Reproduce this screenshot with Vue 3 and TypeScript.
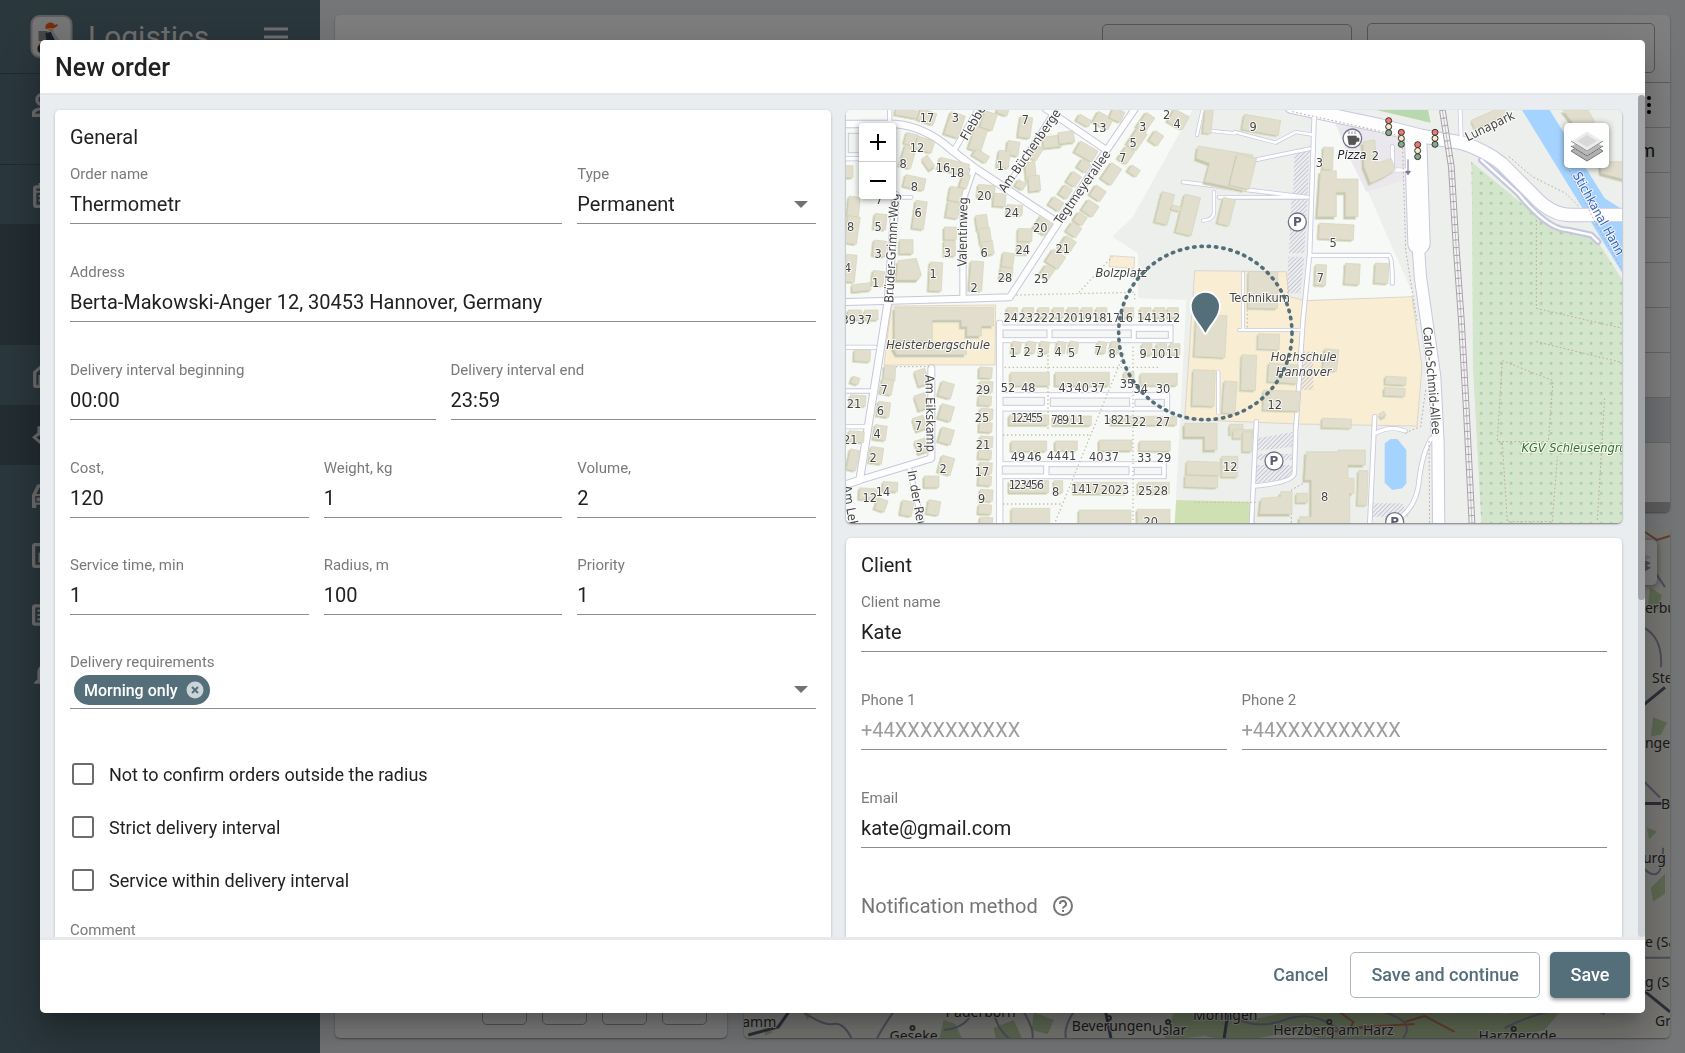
<script setup lang="ts">
import { ref } from 'vue'

interface Field { id: string; label: string; value: string; type?: string; hint?: string }
type Block = [number, number, number, number, number?]
type Label = [number, number, string, number?, string?]
interface Tile { dx: number; dy: number; blocks: Block[]; shapes: string[]; labels: Label[] }

const nameField = ref('Thermometr')
const orderType = ref('Permanent')
const address = ref('Berta-Makowski-Anger 12, 30453 Hannover, Germany')

const intervals = ref<Field[]>([
  { id: 'from', label: 'Delivery interval beginning', value: '00:00' },
  { id: 'to', label: 'Delivery interval end', value: '23:59' },
])
const numbers = ref<Field[]>([
  { id: 'cost', label: 'Cost,', value: '120' },
  { id: 'weight', label: 'Weight, kg', value: '1' },
  { id: 'volume', label: 'Volume,', value: '2' },
  { id: 'service', label: 'Service time, min', value: '1' },
  { id: 'radius', label: 'Radius, m', value: '100' },
  { id: 'priority', label: 'Priority', value: '1' },
])
const phones = ref<Field[]>([
  { id: 'phone1', label: 'Phone 1', value: '', hint: '+44XXXXXXXXXX' },
  { id: 'phone2', label: 'Phone 2', value: '', hint: '+44XXXXXXXXXX' },
])
const clientName = ref('Kate')
const email = ref('kate@gmail.com')
const options = ref([
  { id: 'opt-radius', text: 'Not to confirm orders outside the radius', on: false },
  { id: 'opt-strict', text: 'Strict delivery interval', on: false },
  { id: 'opt-within', text: 'Service within delivery interval', on: false },
])

/* Side navigation icons: 24-unit paths with the class of the row that holds them */
const navIcons = [
  { cls: 'profile', d: 'M9 1a6 6 0 1 1 0 12A6 6 0 0 1 9 1zm0 3a3 3 0 1 0 0 6 3 3 0 0 0 0-6zm0 10c4 0 9 2 9 5v4H0v-4c0-3 5-5 9-5zm0 3c-3 0-6 1-6 3h12c0-2-3-3-6-3z' },
  { cls: 'plan', d: 'M19 3h-1V1h-2v2H8V1H6v2H4a3 3 0 0 0-3 3v15c0 2 1 3 3 3h15a3 3 0 0 0 3-3V6a3 3 0 0 0-3-3zm0 18H4V10h15v11zM4 8V6h15v2H4zm2 4h11v2H6zm0 4h8v2H6z' },
  { cls: 'sub', d: '' },
  { cls: 'row', d: 'M1 22V9l9-8 9 8v13a2 2 0 0 1-2 2H3a2 2 0 0 1-2-2zm3-1h2v-9h8v9h2V10l-6-5-6 5v11z' },
  { cls: 'row active', d: 'M0 14l5-4V4h3v8l-4 2 5 4 11-4v3l-11 5L0 14z' },
  { cls: 'row', d: 'M18 4c0-1-1-2-2-2H6C5 2 4 3 4 4l-4 8v12h4v-3h14v3h3V12l-3-8zM7 5h9l2 6H4l3-6zm12 14H3v-6h16v6zM6 14a2 2 0 1 0 0 4 2 2 0 0 0 0-4z' },
  { cls: 'row', d: 'M19 1H3a3 3 0 0 0-3 3v17a3 3 0 0 0 3 3h16a3 3 0 0 0 3-3V4a3 3 0 0 0-3-3zm0 20H3V4h16v17zM6 10h3v9H6zm5-4h3v13h-3z' },
  { cls: 'row', d: 'M19 2H3a3 3 0 0 0-3 3v14c0 2 1 3 3 3h16a3 3 0 0 0 3-3V5a3 3 0 0 0-3-3zm0 17H3V5h16v14zM5 7h9v2H5zm0 4h9v2H5zm0 4h9v2H5z' },
  { cls: 'row', d: 'M2 20v-1l3-3v-6c0-4 2-7 5-7V1h3v2c3 1 5 3 5 7v6l2 3v1H2z' },
]

/* Street map, three units per pixel; every tile carries its own origin */
const tiles: Tile[] = [
  {
    dx: -18, dy: -30,
    blocks: [
      [205, 40, 75, 22, 10], [262, 50, 50, 36, 20], [345, 75, 44, 70, 18], [447, 62, 38, 50, 18], [415, 118, 38, 70, 18],
      [424, 168, 46, 24, 32], [490, 32, 32, 24, 20], [557, 82, 36, 62, 8], [520, 145, 36, 42, 8], [492, 178, 34, 50, 8],
      [215, 118, 36, 34, 14], [255, 134, 52, 38, 16], [205, 170, 34, 66, 16], [265, 188, 22, 40, -35], [342, 200, 90, 36, 14],
      [376, 243, 22, 44, 18], [225, 248, 62, 36, 12], [638, 125, 55, 34, -6], [680, 112, 46, 34, -8], [592, 160, 18, 44, 32],
      [573, 215, 30, 56, -6], [584, 250, 34, 46, -6], [543, 255, 26, 22, 30], [740, 155, 60, 38, 30], [733, 62, 40, 22, 30],
      [790, 62, 50, 36, 28], [832, 45, 36, 34, 24], [733, 198, 30, 30, 34], [703, 238, 30, 38, 34], [678, 276, 28, 34, 34],
      [650, 312, 36, 30, 34], [918, 68, 30, 54, 34], [892, 118, 34, 60, 34], [860, 166, 30, 46, 34], [815, 222, 36, 58, 34],
      [775, 280, 36, 36, 34], [752, 325, 38, 38, 34], [722, 357, 30, 30, 34], [703, 390, 34, 34, 34], [883, 213, 30, 24, 34],
      [950, 115, 30, 36, 34], [1016, 58, 50, 44, 28], [440, 274, 50, 38, 4], [480, 300, 36, 38, 4], [525, 330, 46, 30, 4],
      [348, 283, 38, 42, 10], [340, 330, 36, 48, 10], [240, 345, 34, 84, 8], [332, 400, 36, 38, 0], [330, 445, 34, 46, 0],
      [427, 368, 34, 46, -8], [436, 408, 34, 46, -8], [444, 444, 34, 40, -8], [610, 378, 42, 44, 34], [556, 405, 42, 38, 2],
      [550, 445, 34, 36, 2], [505, 480, 34, 42, 8], [500, 520, 36, 34, 8], [683, 435, 36, 44, 34], [648, 478, 44, 44, 34],
      [622, 518, 30, 36, 34], [42, 320, 34, 60, 6], [38, 390, 36, 82, 8], [122, 365, 36, 46, 6], [120, 445, 38, 46, 6],
      [200, 440, 40, 42, 0], [115, 535, 34, 44, 8], [65, 562, 56, 22, -6], [32, 505, 32, 82, 6], [288, 530, 38, 86, 3],
      [410, 528, 38, 88, 4], [28, 215, 24, 36, 0], [975, 325, 38, 94, 14], [1045, 345, 48, 118, 14], [1010, 325, 30, 14, 14],
      [1160, 335, 36, 80, 14], [1105, 65, 24, 70, 6],
    ],
    shapes: ['M175 482L230 475L245 525L235 540H170Z', 'M1075 138L1240 165L1215 270L1095 245L1110 190L1070 175Z'],
    labels: [
      [262, 53, '17'], [347, 53, '3'], [557, 58, '7'], [232, 142, '12'], [190, 192, '8'], [310, 203, '16'], [352, 218, '18'],
      [482, 198, '1'], [224, 260, '8'], [434, 287, '20'], [516, 337, '24'], [235, 338, '6'], [33, 380, '8'], [115, 380, '5'],
      [115, 462, '3'], [24, 502, '4'], [108, 548, '1'], [280, 520, '1'], [403, 562, '2'], [323, 459, '3'], [433, 459, '6'],
      [549, 449, '24'], [496, 533, '28'], [602, 384, '20'], [669, 447, '21'], [605, 537, '25'], [849, 172, '7'], [880, 128, '5'],
      [909, 80, '3'], [779, 83, '13'], [1012, 71, '4'], [981, 43, '2'], [118, 300, '7'],
      [400, 68, 'Flebbe', -60], [570, 152, 'Am Büchenberge', -55], [728, 262, 'Tegtmeyerallee', -55],
      [369, 396, 'Valentinweg', -89], [156, 444, 'Brüder-Grimm-Weg', -87], [845, 518, 'Bolzplatz', 0, 'it'],
    ],
  },
  {
    dx: 1167, dy: -30,
    blocks: [
      [280, 175, 30, 66, 2], [305, 395, 104, 46, 3], [258, 525, 32, 62, 3], [353, 522, 44, 62, 3], [441, 520, 40, 60, 3],
      [85, 570, 88, 110, 1], [765, 52, 110, 28, -24], [80, 75, 110, 46, 10], [25, 215, 60, 96, 14],
    ],
    shapes: [
      'M258 212H305V237H370V350H333V277H305V350H248Z', 'M385 125L420 120L428 190L470 175L482 210L450 230L408 250L388 200Z',
      'M985 30H1060L1080 65L1030 90Z', 'M1095 185H1175V240L1100 220Z',
    ],
    labels: [
      [55, 80, '9'], [254, 188, '3'], [295, 428, '5'], [257, 532, '7'], [422, 168, '2'], [352, 165, 'Pizza', 0, 'it strong'],
      [75, 592, 'Technikum'], [765, 78, 'Lunapark', -26], [1092, 340, 'Stichkanal Hann', 61, 'water'],
    ],
  },
  {
    dx: -18, dy: 600,
    blocks: [
      [45, 15, 40, 30, 0], [95, 15, 40, 30, 0], [68, 137, 48, 34, 4], [47, 212, 22, 22, 20], [150, 190, 34, 44, 4],
      [142, 230, 34, 46, 10], [132, 298, 36, 44, 8], [122, 368, 36, 44, 8], [110, 436, 38, 48, 8], [40, 450, 28, 62, 12],
      [246, 202, 34, 46, -18], [246, 275, 34, 46, -18], [240, 340, 34, 40, -18], [246, 408, 34, 40, -18], [320, 240, 38, 46, 16],
      [320, 308, 38, 46, 16], [320, 378, 38, 46, 16], [320, 466, 38, 52, 16], [55, 272, 46, 32, 4], [50, 380, 46, 32, 4],
      [85, 552, 52, 34, 4], [152, 530, 44, 28, 4], [125, 585, 30, 36, 20], [276, 515, 44, 34, 0], [202, 595, 34, 44, 10],
      [282, 593, 36, 42, 10], [438, 188, 38, 32, 4], [440, 230, 38, 32, 4], [436, 272, 38, 28, 4], [440, 312, 38, 32, 4],
      [438, 352, 38, 28, 4], [440, 395, 38, 32, 4], [436, 434, 38, 26, 4], [438, 474, 38, 32, 4], [436, 512, 38, 28, 4],
      [440, 556, 38, 34, 4], [436, 598, 38, 28, 4], [440, 632, 38, 20, 4],
      [518, 8, 32, 30], [566, 8, 32, 30], [612, 8, 32, 30], [656, 8, 32, 30], [700, 8, 32, 30], [742, 8, 32, 30], [786, 8, 32, 30],
      [866, 8, 32, 30], [918, 8, 32, 30], [960, 8, 32, 30], [1000, 8, 32, 30],
      [530, 112, 26, 34, 8], [574, 112, 26, 34, 8], [614, 112, 26, 34, 8], [664, 112, 26, 34, 8], [702, 112, 26, 34, 8], [786, 112, 26, 34, 8],
      [826, 112, 26, 34, 8], [922, 118, 30, 34], [966, 118, 30, 34], [1006, 118, 30, 34],
      [571, 207, 116, 40], [728, 207, 162, 40], [868, 200, 30, 28], [958, 208, 110, 36], [568, 330, 118, 30], [698, 332, 114, 28],
      [850, 332, 70, 26], [948, 332, 126, 26], [568, 408, 106, 30], [680, 407, 66, 28], [828, 406, 98, 32], [946, 408, 92, 30],
      [568, 530, 118, 36], [656, 530, 26, 36], [782, 534, 160, 34], [942, 534, 94, 34], [573, 620, 114, 50], [796, 622, 156, 44],
      [942, 620, 98, 44], [1113, 78, 92, 126, 3], [1092, 234, 66, 108, 2], [1170, 262, 38, 96, 4], [1090, 475, 98, 40, 2],
      [1085, 515, 98, 34, 2], [1170, 470, 48, 62], [1190, 358, 40, 30],
    ],
    shapes: [
      'M165 -8H462V48H425V78H382V50H365V30H278V92H165Z', 'M152 96H380V134H172Z', 'M1035 340H1132V420H1095V380H1035Z',
    ],
    labels: [
      [27, 30, '39'], [75, 28, '37'], [133, 240, '7'], [122, 302, '6'], [112, 371, '4'], [100, 443, '2'], [43, 281, '21'],
      [32, 390, '21'], [236, 346, '7'], [238, 413, '3'], [310, 476, '2'], [90, 563, '12'], [130, 544, '14'],
      [430, 240, '29'], [427, 323, '25'], [430, 405, '21'], [427, 485, '17'], [426, 567, '9'],
      [513, 22, '24'], [558, 22, '23'], [603, 24, '22'], [647, 24, '21'], [692, 22, '20'], [735, 22, '19'], [779, 22, '18'],
      [820, 22, '17'], [858, 24, '16'], [914, 22, '14'], [956, 22, '13'], [1000, 22, '12'],
      [520, 128, '1'], [562, 124, '2'], [602, 128, '3'], [655, 126, '4'], [696, 128, '5'], [775, 123, '7'], [817, 132, '8'],
      [910, 131, '9'], [955, 131, '10'], [1000, 131, '11'],
      [505, 234, '52'], [566, 234, '48'], [678, 234, '43'], [726, 234, '40'], [775, 234, '37'], [862, 222, '35'], [903, 237, '34'],
      [970, 237, '30'], [525, 323, '1'], [541, 323, '2'], [556, 323, '3'], [569, 323, '4'], [585, 323, '5'], [600, 323, '5'],
      [645, 328, '7'], [661, 328, '8'], [678, 328, '9'], [712, 330, '11'], [813, 329, '18'], [853, 329, '21'],
      [898, 334, '22'], [970, 334, '27'], [535, 440, '49'], [584, 440, '46'], [643, 438, '44'], [688, 438, '41'], [770, 440, '40'],
      [816, 440, '37'], [914, 443, '33'], [973, 443, '29'],
      [518, 525, '1'], [534, 525, '2'], [551, 525, '3'], [568, 525, '4'], [584, 525, '5'], [602, 525, '6'], [648, 545, '8'],
      [716, 536, '14'], [757, 536, '17'], [805, 538, '20'], [847, 538, '23'], [917, 541, '25'], [963, 541, '28'], [933, 634, '20'],
      [1172, 470, '12'], [295, 104, 'Heisterbergschule', 0, 'it'], [272, 310, 'Am Eikskamp', 89],
      [233, 574, 'In der Reut', 80], [32, 590, 'Am Leb', 80],
    ],
  },
  {
    dx: 1167, dy: 600,
    blocks: [
      [102, 95, 64, 46, 2], [42, 188, 44, 106, 2], [140, 272, 108, 60, 2], [145, 190, 88, 56, 4], [288, 150, 42, 64, 6],
      [483, 212, 62, 24, 3], [480, 246, 62, 24, 3], [306, 340, 88, 28, 2], [384, 534, 28, 104, 2], [202, 564, 34, 28], [443, 314, 18, 14, -30],
      [25, 372, 60, 26], [38, 395, 28, 60],
    ],
    shapes: [
      'M215 425H310V420H392V465H340V505H358V550H345V645H195V620H230V510H210Z', 'M80 565L138 560V545H172V612H75Z',
    ],
    labels: [
      [207, 140, 'Hochschule', 0, 'it'], [207, 185, 'Hannover', 0, 'it'], [120, 285, '12'], [270, 560, '8'],
      [592, 212, 'Carlo-Schmid-Allee', 85], [1018, 412, 'KGV Schleusengru', 0, 'garden'],
    ],
  },
]

/* Streets: path, width of the casing, width of the carriageway */
const streets: [string, number, number][] = [
  ['M0 42H150Q240 50 320 122L385 172L632 335', 26, 20],
  ['M0 576L492 562L640 335L782 122L872 -10', 24, 18],
  ['M385 172L352 270V562', 22, 16],
  ['M327 118L400 -6', 20, 15],
  ['M482 232L622 10', 18, 12],
  ['M600 -4L782 120', 24, 18],
  ['M150 255L127 575L42 1110L0 1124', 26, 20],
  ['M150 262H196', 14, 9],
  ['M42 1110L257 1045V775', 24, 18],
  ['M192 1080L232 1250', 18, 13],
  ['M0 712H88M0 843H78M0 950H62', 16, 11],
  ['M0 146H60', 16, 11],
  ['M132 -5V42', 16, 11],
  ['M462 640V1250', 22, 17],
  ['M1406 10L1392 430L1372 630L1358 850L1350 960L1346 1090Q1340 1118 1225 1128', 16, 11],
  ['M1012 216L1387 262H1120M1228 150L1392 116', 14, 9],
  ['M1392 436H1630Q1640 440 1640 520', 15, 10],
  ['M1105 246V310Q1100 330 1072 332', 12, 8],
  ['M1180 660H1372M1192 490V660', 12, 8],
  ['M1054 75L1072 -5M1072 60L1167 70M1167 66L1290 98L1350 66L1400 74', 12, 8],
  ['M1232 935L1217 1250', 16, 11],
  ['M1118 785V910', 12, 8],
  ['M1587 920L1572 1245', 16, 11],
  ['M1592 968Q1640 945 1680 964', 14, 10],
  ['M1757 985Q1728 1030 1718 1130Q1707 1190 1667 1220', 16, 11],
  ['M1640 110V175M1640 180H1680', 14, 10],
  ['M1907 150L2017 250Q2107 360 2167 360L2237 375L2257 395', 20, 7],
  ['M1337 -10L1597 45L1727 78L1847 98Q1917 120 1967 160L2067 260Q2117 315 2177 315H2340', 44, 38],
  ['M1847 95L1843 -5', 14, 10],
  ['M1702 78L1712 320L1724 500L1744 640L1767 800L1777 1000L1779 1250', 40, 34],
  ['M1710 90L1720 400', 70, 64],
]
const islands: Block[] = [
  [472, 660, 132, 23], [619, 660, 238, 23], [872, 664, 96, 21],
  [472, 862, 124, 24], [614, 864, 238, 25], [868, 868, 88, 21],
  [470, 1068, 124, 24], [610, 1070, 240, 24], [866, 1072, 82, 22],
]
const bands: Block[] = [[462, 645, 520, 53], [462, 848, 510, 55], [462, 1055, 500, 51]]
const parking = [
  'M1347 130L1392 120L1386 255H1342Z', 'M1337 265H1386L1376 430H1330Z', 'M1328 440H1376L1364 550H1324Z',
  'M1235 985L1345 965V1010L1235 1022Z', 'M1232 1032H1342V1050H1232Z', 'M1230 1065H1342V1105L1228 1120Z',
  'M1367 725H1403V840H1367Z', 'M1580 1180H1670L1690 1220H1580Z',
]
const paths = [
  'M512 555L867 547V572', 'M477 772H945', 'M607 700V960', 'M862 710V1250', 'M472 975H735', 'M835 730L627 1240', 'M472 1182H650',
  'M700 547L800 440', 'M1205 540V660', 'M1046 1177H1230', 'M115 770H255',
]
const trails = [
  'M1340 5L1597 62L1670 80L1680 420L1715 640', 'M1990 140L2060 200L2160 250L2200 290', 'M2160 160L2250 340L2330 480',
  'M2072 330V595L2330 655', 'M2072 695L2330 758M1970 752L2122 812L2108 995H1955L1970 752', 'M1970 1000L1985 1235H2120L2135 1040', 'M2277 865L2255 1230',
  'M1740 840L1725 950L1680 968', 'M1752 1250L1750 990', 'M1337 1250V1140L1390 1110',
]
const lights = [[1629, 50], [1667, 85], [1716, 122], [1768, 85]]
const parks = [[1355, 336], [1285, 1053], [1647, 1235]]

const placesRight: [number, number, string][] = [
  [900, 86, 'erbu'], [907, 156, 'Ste'], [900, 221, 'nger'], [916, 281, 'B'], [898, 335, 'urg'], [900, 419, 'e (Sa'], [900, 459, 'g (Sa'], [910, 498, 'Gr'],
]
const placesBottom: [number, number, string][] = [
  [-1, 499, 'amm'], [146, 513, 'Geseke'], [202, 489, 'Paderborn'], [328, 503, 'Beverungen'], [408, 507, 'Uslar'], [449, 492, 'Moringen'],
  [529, 507, 'Herzberg am Harz'], [734, 513, 'Harzgerode'],
]
</script>

<template>
  <div class="shell">
    <aside class="side">
      <div class="brand">
        <svg class="logo" viewBox="0 0 42 43" aria-hidden="true">
          <rect x="1" y="1" width="40" height="41" rx="8" fill="#ececec" stroke="#bdbdbd" stroke-width="2" />
          <path d="M8 16h9v10H8z" fill="#8b8f90" />
          <path d="M15 12c0-5 8-6 9-2l3-1v2l-3 2-9 1z" fill="#ea5b1b" />
          <path d="M18 13h5v4l-3 2-2-2z" fill="#e8b894" />
          <path d="M15 18l5-1 8 9-3 4-9-3z" fill="#2e3d50" />
          <path d="M23 17l6 8-3 3-5-9z" fill="#c9c4ce" />
          <path d="M7 34c0-7 6-9 12-5l-3 5z" fill="#ea5b1b" />
          <circle cx="11" cy="34" r="4" fill="#333" />
        </svg>
        <span class="brand-name">Logistics</span>
        <svg class="burger" viewBox="0 0 24 20" aria-hidden="true"><path d="M0 2h24M0 10h24M0 18h24" stroke="#ddd" stroke-width="3" /></svg>
      </div>
      <div v-for="(n, i) in navIcons" :key="i" class="nav" :class="n.cls">
        <svg v-if="n.d" viewBox="0 0 24 24" aria-hidden="true"><path :d="n.d" fill-rule="evenodd" /></svg>
      </div>
    </aside>

    <div class="page">
      <section class="panel orders">
        <div class="tools"><span class="box narrow"></span><span class="box"></span></div>
        <div class="line head"><svg viewBox="0 0 6 20" aria-hidden="true"><circle cx="3" cy="3" r="2" /><circle cx="3" cy="10" r="2" /><circle cx="3" cy="17" r="2" /></svg></div>
        <div class="line text">m</div>
        <div v-for="r in 5" :key="r" class="line"></div>
        <div class="line picked"></div>
        <div class="line last"></div>
        <div class="hbar"></div>
      </section>
      <div class="lower">
        <section class="panel pager"><span v-for="b in 4" :key="b" class="page-btn"></span></section>
        <section class="panel region">
          <svg viewBox="0 0 925 510" preserveAspectRatio="xMaxYMax slice" aria-hidden="true">
            <rect width="925" height="510" fill="#efeee8" />
            <g fill="#bcd3a6">
              <path d="M430 485l30-8 50 14 80-16 30 5 100-4 40 10 60-8-20 24-50 10-40 4-60-6-60 4-40-10-60 10-30-6-40 4z" />
              <path d="M200 492l12 4 6 14h-22zM250 500l20-8 8 18h-26zM290 484l20 8-6 14-16-4zM60 484l8 2-4 6zM20 500l10 4-8 4z" />
              <path d="M905 60l12 8-4 14-10-4zM908 190l14 5-6 12-10 2zM906 360l14-14v20l-12 8zM902 300l10 4-8 8z" />
            </g>
            <g fill="none" stroke="#9a9cb8" stroke-width="2">
              <path d="M60 484q20 14 30 12t18 14M150 484q-14 20-18 30M230 480q-5 20-30 22M250 484q4 20 20 30M280 484q12 20 8 28M330 484q-10 14-8 26M480 484q30 20 60 8t60 14M640 484q30 10 20 24t50 16M760 500q60-30 100-14" />
              <path d="M900 30l20 30M898 100q20 10 18 40M898 340q20 20 20-20M900 430h25M895 250l20 20" />
            </g>
            <path d="M5 507l30-8 14-20M361 480l6 30M484 484l-4 26M898 462l27 22M898 276h27M898 178l22-18" fill="none" stroke="#5b5c78" stroke-width="3" />
            <path d="M595 484l14 10-8 14M660 494l20-6 30 16M600 500l70-4M900 5l12 8 13-4M608 500l20 0M560 500l40 4" fill="none" stroke="#cc7c60" stroke-width="2" />
            <g class="place">
              <text v-for="p in placesRight" :key="p[1]" :x="p[0]" :y="p[1]">{{ p[2] }}</text>
              <text v-for="p in placesBottom" :key="p[2]" :x="p[0]" :y="p[1]">{{ p[2] }}</text>
            </g>
            <g fill="#eee" stroke="#555" stroke-width="2"><circle cx="169" cy="500" r="2" /><circle cx="365" cy="490" r="2" /><circle cx="424" cy="494" r="2" /><circle cx="585" cy="494" r="2" /><circle cx="769" cy="501" r="2" /></g>
          </svg>
          <span class="layers"><svg viewBox="0 0 36 34" aria-hidden="true"><path d="M1 22l17 10 17-10-17-8zM1 17l17 10 17-10-17-8z" fill="#999" /><path d="M1 11l17 10 17-10L18 2z" fill="#ddd" /></svg></span>
        </section>
      </div>
    </div>

    <div class="backdrop">
      <div class="dialog" role="dialog" aria-labelledby="dialog-title">
        <header class="dialog-head"><h1 id="dialog-title">New order</h1></header>

        <div class="dialog-main">
          <div class="dialog-body">
            <section class="card">
              <h2>General</h2>
              <div class="grid three">
                <div class="field wide"><label for="order-name">Order name</label><input id="order-name" v-model="nameField" type="text" /></div>
                <div class="field">
                  <label for="order-type">Type</label>
                  <select id="order-type" v-model="orderType"><option>Permanent</option><option>Temporary</option></select>
                  <svg class="arrow" viewBox="0 0 14 7" aria-hidden="true"><path d="M0 0h14L7 7z" /></svg>
                </div>
                <div class="field full"><label for="address">Address</label><input id="address" v-model="address" type="text" /></div>
              </div>
              <div class="grid two">
                <div v-for="f in intervals" :key="f.id" class="field"><label :for="f.id">{{ f.label }}</label><input :id="f.id" v-model="f.value" type="text" /></div>
              </div>
              <div class="grid three tight">
                <div v-for="f in numbers" :key="f.id" class="field"><label :for="f.id">{{ f.label }}</label><input :id="f.id" v-model="f.value" type="text" /></div>
              </div>
              <div class="field">
                <span id="req-label" class="label">Delivery requirements</span>
                <div class="chips" role="group" aria-labelledby="req-label">
                  <span class="chip">Morning only
                    <button type="button" aria-label="Remove"><svg viewBox="0 0 18 18"><circle cx="9" cy="9" r="8.500" fill="#cbd4d8" /><path d="M6 6l6 6M12 6l-6 6" stroke="#546e7a" stroke-width="2" /></svg></button>
                  </span>
                  <svg class="arrow" viewBox="0 0 14 7" aria-hidden="true"><path d="M0 0h14L7 7z" /></svg>
                </div>
              </div>
              <div class="checks">
                <label v-for="o in options" :key="o.id" :for="o.id" class="check"><input :id="o.id" v-model="o.on" type="checkbox" />{{ o.text }}</label>
              </div>
              <div class="field"><label for="comment">Comment</label><input id="comment" type="text" /></div>
            </section>

            <div class="side-col">
              <section class="map">
                <svg class="plan-view" viewBox="0 0 2330 1239" preserveAspectRatio="xMidYMid slice" role="img" aria-label="Map">
                  <defs>
                    <pattern id="dots" width="30" height="30" patternUnits="userSpaceOnUse" x="1892" y="30"><rect x="11" y="6" width="7" height="8" fill="#a9ccaa" /></pattern>
                    <pattern id="hatch" width="9" height="9" patternUnits="userSpaceOnUse" patternTransform="rotate(45)"><path d="M1 0v9" stroke="#bdbcd6" stroke-width="3" /></pattern>
                  </defs>
                  <rect width="2330" height="1239" fill="#edefec" />
                  <path d="M0 0H1040L862 320L800 380L877 430V565L1022 570L987 1240H0Z" fill="#f6f9f5" />
                  <path d="M1407 15L1470 25L1705 560L1380 570Z" fill="#f6f9f5" />
                  <path d="M1467 35L1667 70L1677 210L1562 245L1510 140Z" fill="#eae7ed" />
                  <path d="M1592 0H1747L1755 38Z" fill="#bad8b0" />
                  <path d="M992 1170L1227 1176V1240H987Z" fill="#cfe0b3" />
                  <g fill="#f9edd3" stroke="#cfc9c4" stroke-width="2">
                    <path d="M137 588L450 585L448 765H115Z" />
                    <path d="M1047 482L1322 485L1330 560L1382 572L1699 560L1729 770L1714 948L1357 942L1017 928Z" />
                    <path d="M794 437L867 442L865 475L790 470Z" />
                  </g>
                  <path d="M2029 0H2112L2277 265L2340 305V505Z" fill="#a5d3ff" />
                  <path d="M1877 155L2027 280L2127 360L2247 380L2330 510V1240H1907L1882 770L1879 270Z" fill="#d3e5ca" />
                  <path d="M1877 155L2027 280L2127 360L2247 380L2330 510V1240H1907L1882 770L1879 270Z" fill="url(#dots)" />
                  <path d="M1617 1000L1635 987H1655L1682 1020V1120L1670 1135L1640 1140L1617 1118Z" fill="#a5d3ff" />
                  <path v-for="p in parking" :key="p" :d="p" fill="url(#hatch)" />
                  <rect x="8" y="70" width="70" height="58" fill="#f0f4ef" stroke="#c9cae0" stroke-width="3" />

                  <path v-for="s in streets" :key="'c' + s[0]" :d="s[0]" fill="none" stroke="#c5c7de" :stroke-width="s[1]" stroke-linecap="round" stroke-linejoin="round" />
                  <rect v-for="b in bands" :key="b[1]" :x="b[0]" :y="b[1]" :width="b[2]" :height="b[3]" fill="#fefefe" stroke="#cccee0" stroke-width="3" />
                  <path v-for="s in streets" :key="'f' + s[0]" :d="s[0]" fill="none" stroke="#fefefe" :stroke-width="s[2]" stroke-linecap="round" stroke-linejoin="round" />
                  <rect v-for="b in islands" :key="b[0] + '-' + b[1]" :x="b[0]" :y="b[1]" :width="b[2]" :height="b[3]" fill="#f4f7f4" stroke="#c9cbe0" stroke-width="3" />

                  <g fill="none">
                    <path v-for="p in paths" :key="p" :d="p" stroke="#c2bfa2" stroke-width="4" stroke-dasharray="4 8" />
                    <path v-for="p in trails" :key="p" :d="p" stroke="#bfa9a0" stroke-width="3" stroke-dasharray="5 7" />
                    <path d="M1790 0L1817 170L1832 420L1847 630L1862 900L1879 1240" stroke="#a7a2a8" stroke-width="20" />
                    <path d="M1790 0L1817 170L1832 420L1847 630L1862 900L1879 1240" stroke="#f4f4f4" stroke-width="14" />
                    <path d="M1790 0L1817 170L1832 420L1847 630L1862 900L1879 1240" stroke="#a7a2a8" stroke-width="14" stroke-dasharray="3 20" />
                    <path d="M1790 0L1817 170L1832 420L1847 630L1862 900L1879 1240" stroke="#a7a2a8" stroke-width="2" />
                  </g>

                  <g v-for="(t, k) in tiles" :key="k" :transform="`translate(${t.dx} ${t.dy})`" stroke-linejoin="round">
                    <g v-for="(b, i) in t.blocks" :key="i" :transform="`translate(${b[0]} ${b[1]}) rotate(${b[4] ?? 0})`">
                      <rect :x="-b[2] / 2 - 5" :y="-b[3] / 2 + 5" :width="b[2]" :height="b[3]" rx="3" fill="#cbc8b4" stroke="#dde3cc" stroke-width="3" />
                      <rect :x="-b[2] / 2" :y="-b[3] / 2" :width="b[2]" :height="b[3]" fill="#e2dece" stroke="#d3d4ba" stroke-width="2" />
                    </g>
                    <template v-for="s in t.shapes" :key="s">
                      <path :d="s" transform="translate(-7 8)" fill="#c9c6b4" stroke="#dde3cc" stroke-width="3" />
                      <path :d="s" fill="#e2dece" stroke="#d3d4ba" stroke-width="2" />
                    </template>
                  </g>

                  <g stroke="#333" stroke-width="3">
                    <template v-for="l in lights" :key="l[0]">
                      <circle :cx="l[0]" :cy="l[1] - 18" r="9" fill="#f0796f" />
                      <circle :cx="l[0]" :cy="l[1]" r="9" fill="#f5e9c8" />
                      <circle :cx="l[0]" :cy="l[1] + 18" r="9" fill="#86ab8c" />
                    </template>
                  </g>
                  <path d="M1687 148V188M1680 184L1687 194L1694 184Z" fill="#77779a" stroke="#77779a" stroke-width="3" />
                  <g fill="#fff" stroke="#73738a" stroke-width="4">
                    <circle v-for="p in parks" :key="p[0]" :cx="p[0]" :cy="p[1]" r="27" />
                    <circle cx="1520" cy="85" r="28" />
                  </g>
                  <path d="M1506 78H1532V84H1540V94H1532L1528 104H1510ZM1510 64V72M1519 64V72M1528 64V72" fill="#555" stroke="#555" stroke-width="2" />
                  <g class="park"><text v-for="p in parks" :key="p[0]" :x="p[0]" :y="p[1] + 13">P</text></g>

                  <g v-for="(t, k) in tiles" :key="'l' + k" :transform="`translate(${t.dx} ${t.dy})`" class="names">
                    <text v-for="(l, i) in t.labels" :key="i" :class="l[4]" :transform="`translate(${l[0]} ${l[1]}) rotate(${l[3] ?? 0})`" y="13">{{ l[2] }}</text>
                  </g>

                  <circle cx="1079" cy="669" r="260" fill="none" stroke="#546e7a" stroke-width="11" stroke-linecap="round" stroke-dasharray="4 18" />
                  <path d="M1079 668C1062 638 1038 618 1038 589A41 41 0 0 1 1120 589C1120 618 1096 638 1079 668Z" fill="#546e7a" stroke="#fff" stroke-width="12" stroke-linejoin="round" paint-order="stroke" />
                </svg>
                <div class="zoom">
                  <button type="button" aria-label="Zoom in"><svg viewBox="0 0 16 16"><path d="M0 8h16M8 0v16" /></svg></button>
                  <button type="button" aria-label="Zoom out"><svg viewBox="0 0 16 16"><path d="M0 8h16" /></svg></button>
                </div>
                <button type="button" class="layers" aria-label="Layers">
                  <svg viewBox="0 0 34 32" aria-hidden="true">
                    <path d="M1 21L17 11L33 21L17 31Z" fill="#b0b0b0" stroke="#777" />
                    <path d="M1 16L17 6L33 16L17 26Z" fill="#b8b8b8" stroke="#fff" /><path d="M1 16L17 26L33 16" fill="none" stroke="#666" />
                    <path d="M1 11L17 1L33 11L17 21Z" fill="#ececec" stroke="#fff" /><path d="M7 11L17 5L27 11L17 17Z" fill="#d8d8d8" /><path d="M1 11L17 21L33 11" fill="none" stroke="#888" />
                  </svg>
                </button>
              </section>

              <section class="card">
                <h2>Client</h2>
                <div class="grid">
                  <div class="field"><label for="client-name">Client name</label><input id="client-name" v-model="clientName" type="text" /></div>
                </div>
                <div class="grid two">
                  <div v-for="f in phones" :key="f.id" class="field"><label :for="f.id">{{ f.label }}</label><input :id="f.id" v-model="f.value" type="tel" :placeholder="f.hint" /></div>
                </div>
                <div class="field"><label for="email">Email</label><input id="email" v-model="email" type="email" /></div>
                <div class="notify">
                  <span>Notification method</span>
                  <svg viewBox="0 0 22 22" aria-hidden="true"><circle cx="11" cy="11" r="9" /><path d="M8 9a3 3 0 1 1 4.500 2.500Q11 12.500 11 13.500" /><path d="M11 15v2" /></svg>
                </div>
              </section>
            </div>
          </div>
          <div class="scroll" aria-hidden="true"><div class="thumb"></div></div>
        </div>

        <footer class="dialog-foot">
          <button type="button" class="btn plain">Cancel</button>
          <button type="button" class="btn outlined">Save and continue</button>
          <button type="button" class="btn filled">Save</button>
        </footer>
      </div>
    </div>
  </div>
</template>

<style>
body {
  margin: 0;
  background: #e9edf0;
}
</style>

<style scoped>
* {
  box-sizing: border-box;
}
.shell {
  display: flex;
  height: 100vh;
  overflow: hidden;
  font-family: Roboto, sans-serif;
  color: #212121;
}

/* Side navigation */
.side {
  width: 320px;
  flex: none;
  background: #546e7a;
}
.brand {
  display: flex;
  align-items: center;
  height: 73px;
  padding: 0 32px 0 30px;
  gap: 15px;
}
.logo {
  width: 43px;
  height: 43px;
}
.brand-name {
  flex: 1;
  font-size: 30px;
  color: #ddd;
}
.burger {
  width: 24px;
  height: 20px;
}
.nav {
  display: flex;
  align-items: center;
  height: 60px;
  padding-left: 32px;
}
.nav svg {
  width: 26px;
  height: 26px;
  fill: #d8d8d8;
}
.profile {
  height: 91px;
  padding-bottom: 28px;
  border-top: 1px solid #3f5660;
}
.plan {
  border-top: 1px solid #3f5660;
}
.sub {
  height: 121px;
  background: #455a64;
}
.row.active {
  background: #455a64;
}

/* Page behind the dialog */
.page {
  flex: 1;
  display: flex;
  flex-direction: column;
  gap: 15px;
  padding: 15px;
  background: #e9edf0;
}
.panel {
  background: #fff;
  border-radius: 5px;
  box-shadow: 0 1px 2px rgba(0, 0, 0, 0.4);
  overflow: hidden;
}
.orders {
  height: 497px;
  flex: none;
  display: flex;
  flex-direction: column;
}
.tools {
  display: flex;
  justify-content: flex-end;
  gap: 15px;
  height: 68px;
  padding: 8px 15px;
  border-bottom: 1px solid #bbb;
}
.box {
  width: 288px;
  height: 50px;
  border: 1px solid #aaa;
  border-radius: 5px;
}
.box.narrow {
  width: 250px;
  margin-top: 1px;
}
.line {
  display: flex;
  align-items: center;
  justify-content: flex-end;
  height: 45px;
  padding-right: 15px;
  border-bottom: 1px solid #ccc;
  font-size: 18px;
}
.line svg {
  width: 6px;
  height: 20px;
  margin-right: 3px;
}
.picked {
  background: #dfe3e8;
}
.line.last {
  flex: 1;
  border: 0;
}
.hbar {
  height: 10px;
  flex: none;
  background: #bbb;
}
.lower {
  flex: 1;
  display: flex;
  gap: 17px;
}
.pager {
  width: 392px;
  display: flex;
  justify-content: flex-end;
  align-items: flex-end;
  gap: 15px;
  padding: 13px 20px;
}
.page-btn {
  width: 45px;
  height: 45px;
  border: 1px solid #aaa;
  border-radius: 5px;
}
.region {
  flex: 1;
  position: relative;
}
.region > svg {
  display: block;
  width: 100%;
  height: 100%;
}
.place text {
  font: 14px 'Noto Sans', sans-serif;
  fill: #333;
  stroke: #f4f4ee;
  stroke-width: 2px;
  paint-order: stroke;
}

/* Dialog */
.backdrop {
  position: fixed;
  inset: 0;
  display: flex;
  padding: 40px;
  background: rgba(0, 0, 0, 0.5);
}
.dialog {
  flex: 1;
  min-width: 0;
  display: flex;
  flex-direction: column;
  background: #fff;
  border-radius: 5px;
  overflow: hidden;
  box-shadow: 0 11px 15px -7px rgba(0, 0, 0, 0.2), 0 24px 38px 3px rgba(0, 0, 0, 0.14), 0 9px 46px 8px rgba(0, 0, 0, 0.12);
}
.dialog-head {
  height: 55px;
  flex: none;
  padding: 0 15px;
  border-bottom: 2px solid #e4e8eb;
}
h1 {
  margin: 0;
  font-size: 25px;
  line-height: 55px;
  font-weight: 500;
}
h2 {
  margin: 0 0 15px;
  font-size: 20px;
  line-height: 24px;
  font-weight: 400;
}
.dialog-main {
  flex: 1;
  min-height: 0;
  display: flex;
  background: #e9edf0;
}
.dialog-body {
  flex: 1;
  min-width: 0;
  overflow: hidden;
  display: grid;
  grid-template-columns: minmax(0, 1fr) minmax(0, 1fr);
  gap: 15px;
  padding: 15px 16px 0 15px;
}
.scroll {
  width: 7px;
  flex: none;
  background: #cfd2d6;
  border-radius: 4px;
}
.thumb {
  height: 60%;
  border-radius: 4px;
  background: #9fa1a5;
}
.card {
  padding: 15px;
  background: #fff;
  border-radius: 5px;
  box-shadow: 0 1px 3px rgba(0, 0, 0, 0.25);
}
.side-col {
  display: flex;
  flex-direction: column;
  gap: 15px;
}
.side-col .card {
  flex: 1;
}

/* Form fields */
.grid {
  display: grid;
  gap: 38px 15px;
  margin-bottom: 38px;
}
.tight {
  row-gap: 37px;
  margin-bottom: 37px;
}
.two {
  grid-template-columns: repeat(2, minmax(0, 1fr));
}
.three {
  grid-template-columns: repeat(3, minmax(0, 1fr));
}
.wide {
  grid-column: span 2;
}
.full {
  grid-column: 1 / -1;
}
.field {
  position: relative;
  display: flex;
  flex-direction: column;
}
.field label,
.label {
  font-size: 15px;
  line-height: 20px;
  color: #7a7a7a;
}
.field input,
.field select {
  width: 100%;
  height: 40px;
  padding: 0;
  border: 0;
  border-bottom: 1px solid #8c8c8c;
  border-radius: 0;
  outline: 0;
  appearance: none;
  background: transparent;
  font: 400 20px Roboto, sans-serif;
  color: #212121;
}
.field input::placeholder {
  color: #9e9e9e;
}
.arrow {
  position: absolute;
  right: 8px;
  bottom: 16px;
  width: 14px;
  height: 7px;
  fill: #707274;
  pointer-events: none;
}
.chips {
  display: flex;
  align-items: center;
  height: 37px;
  padding-left: 4px;
  border-bottom: 1px solid #8c8c8c;
}
.chip {
  display: flex;
  align-items: center;
  gap: 8px;
  height: 30px;
  padding: 0 6px 0 10px;
  border-radius: 15px;
  background: #546e7a;
  color: #fff;
  font-size: 16px;
  font-weight: 500;
}
.chip button {
  width: 18px;
  height: 18px;
  padding: 0;
  border: 0;
  background: none;
}
.chip svg {
  display: block;
}
.checks {
  display: flex;
  flex-direction: column;
  gap: 29px;
  margin: 53px 0 28px;
}
.check {
  display: flex;
  align-items: center;
  gap: 15px;
  height: 24px;
  padding-left: 2px;
  font-size: 18px;
}
.check input {
  width: 22px;
  height: 22px;
  margin: 0;
  border: 2px solid #6c6c6c;
  border-radius: 3px;
  appearance: none;
}
.notify {
  display: flex;
  align-items: center;
  gap: 14px;
  height: 24px;
  margin-top: 46px;
  font-size: 20px;
  color: #757575;
}
.notify svg {
  width: 22px;
  height: 22px;
  fill: none;
  stroke: #757575;
  stroke-width: 2;
}

/* Map */
.map {
  position: relative;
  height: 413px;
  flex: none;
  border-radius: 5px;
  overflow: hidden;
  box-shadow: 0 1px 2px rgba(0, 0, 0, 0.5);
}
.plan-view {
  display: block;
  width: 100%;
  height: 100%;
}
.names text {
  font: 38px 'DejaVu Sans Condensed', 'DejaVu Sans', sans-serif;
  text-anchor: middle;
  fill: #444;
  stroke: rgba(255, 255, 255, 0.8);
  stroke-width: 6px;
  paint-order: stroke;
}
.names .it {
  font-style: italic;
}
.names .strong {
  fill: #222;
}
.names .water {
  fill: #3a5fba;
}
.names .garden {
  font-style: italic;
  fill: #38702c;
}
.park text {
  font: 700 36px 'DejaVu Sans', sans-serif;
  text-anchor: middle;
  fill: #5c5c70;
}
.zoom {
  position: absolute;
  left: 13px;
  top: 13px;
  width: 37px;
  border-radius: 4px;
  overflow: hidden;
  background: #fff;
  box-shadow: 0 1px 6px rgba(0, 0, 0, 0.45);
}
.zoom button {
  display: flex;
  align-items: center;
  justify-content: center;
  width: 37px;
  height: 38px;
  padding: 0;
  border: 0;
  background: #fff;
}
.zoom button + button {
  border-top: 1px solid #ccc;
}
.zoom svg {
  width: 16px;
  height: 16px;
  stroke: #000;
  stroke-width: 2;
}
.layers {
  position: absolute;
  right: 13px;
  top: 13px;
  display: flex;
  align-items: center;
  justify-content: center;
  width: 45px;
  height: 45px;
  padding: 0;
  border: 0;
  border-radius: 5px;
  background: #fff;
  box-shadow: 0 1px 6px rgba(0, 0, 0, 0.45);
}
.layers svg {
  width: 34px;
  height: 32px;
}

/* Actions */
.dialog-foot {
  display: flex;
  justify-content: flex-end;
  align-items: center;
  gap: 10px;
  height: 76px;
  flex: none;
  padding: 0 15px 4px;
  border-top: 3px solid #e8e8ec;
}
.btn {
  height: 46px;
  padding: 0 20px;
  border: 0;
  border-radius: 5px;
  background: #fff;
  color: #546e7a;
  font: 500 18px Roboto, sans-serif;
}
.plain {
  padding: 0 12px;
}
.outlined {
  border: 1px solid #a9b6bc;
}
.filled {
  min-width: 80px;
  background: #546e7a;
  color: #fff;
  box-shadow: 0 2px 4px rgba(0, 0, 0, 0.4);
}
</style>
